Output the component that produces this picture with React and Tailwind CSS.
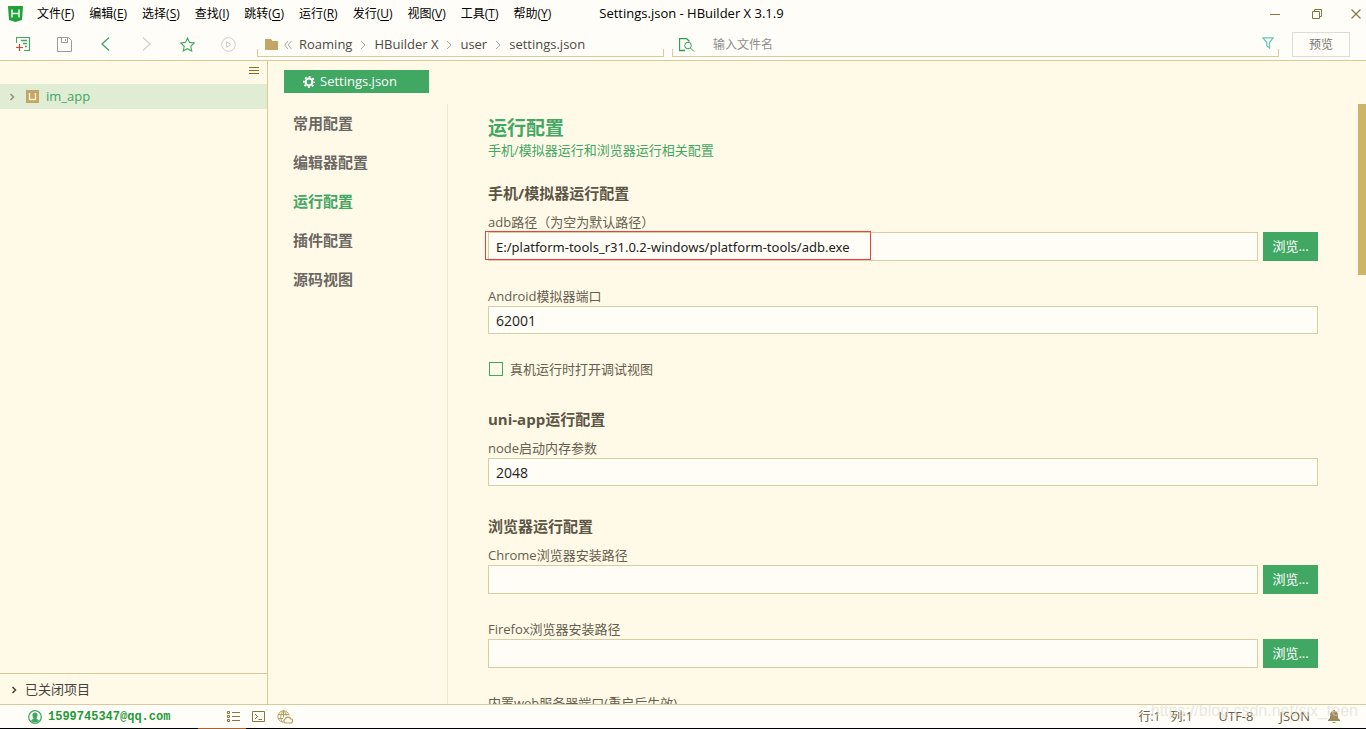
import { useState } from "react";

const menus = [
    ["文件", "F"],
    ["编辑", "E"],
    ["选择", "S"],
    ["查找", "I"],
    ["跳转", "G"],
    ["运行", "R"],
    ["发行", "U"],
    ["视图", "V"],
    ["工具", "T"],
    ["帮助", "Y"],
];

const crumbs = ["Roaming", "HBuilder X", "user", "settings.json"];

const navItems = ["常用配置", "编辑器配置", "运行配置", "插件配置", "源码视图"];

function ToolButton({ label, children }) {
    return (
        <button aria-label={label} className="flex h-8 w-[41px] items-center justify-center">
            {children}
        </button>
    );
}

function Chevron({ className }) {
    return (
        <svg width="6" height="10" viewBox="0 0 6 10" fill="none" stroke="currentColor" className={className}>
            <path d="M1 1l4 4-4 4" />
        </svg>
    );
}

function TreeArrow({ className }) {
    return (
        <svg width="6" height="8" viewBox="0 0 6 8" fill="none" stroke="currentColor" strokeWidth="1.500" className={className}>
            <path d="M1.500 1l3 3-3 3" />
        </svg>
    );
}

// open-bottom frame under the path bar and the search box
function Bracket() {
    return <div className="pointer-events-none absolute inset-x-0 bottom-0 h-2 border-x border-b border-[#d9c99b]" />;
}

function TitleBar() {
    return (
        <header className="flex h-7 shrink-0 items-center pl-2 text-xs text-black">
            <svg width="15" height="16" viewBox="0 0 15 16" className="shrink-0">
                <path d="M0 0h15l-1 14-6.500 2L1 14z" fill="#22a03c" />
                <path d="M4 3.500v8M11 3.500v8M4 7.500h7" stroke="#e9fbe9" strokeWidth="1.500" fill="none" />
            </svg>
            <nav className="ml-[14px] flex gap-[15px]">
                {menus.map(([name, key]) => (
                    <button key={key} className="whitespace-nowrap">
                        {name}(<span className="underline underline-offset-2">{key}</span>)
                    </button>
                ))}
            </nav>
            <h1 className="ml-12 whitespace-nowrap text-[13px]">Settings.json - HBuilder X 3.1.9</h1>
            <div className="ml-auto flex items-center text-[#8a7440]">
                <button aria-label="最小化" className="flex w-[42px] justify-center">
                    <svg width="10" height="11" viewBox="0 0 10 11" stroke="currentColor"><path d="M0 5.500h10" /></svg>
                </button>
                <button aria-label="还原" className="flex w-[42px] justify-center">
                    <svg width="10" height="10" viewBox="0 0 10 10" fill="none" stroke="currentColor">
                        <path d="M.5 2.500h7v7h-7zM2.500 2.500v-2h7v7h-2" />
                    </svg>
                </button>
                <button aria-label="关闭" className="ml-2 flex w-5 justify-center">
                    <svg width="10" height="10" viewBox="0 0 10 10" fill="none" stroke="currentColor" strokeWidth="1.200">
                        <path d="M.5.5l9 9M9.500.5l-9 9" />
                    </svg>
                </button>
            </div>
        </header>
    );
}

function ToolBar() {
    return (
        <div className="flex h-[33px] shrink-0 border-b border-[#d9c99b] pl-[3px]">
            <div className="flex shrink-0">
                <ToolButton label="新建">
                    <svg width="15" height="15" viewBox="0 0 15 15" fill="none">
                        <path d="M.5 6V.5h13v13H8" stroke="#41a863" strokeWidth="1.200" />
                        <path d="M5 3.500h6M7 6.500h4M9 9.500h2" stroke="#41a863" strokeWidth="1.300" />
                        <path d="M0 10.500h7M3.500 7v7" stroke="#d8452e" strokeWidth="1.200" />
                    </svg>
                </ToolButton>
                <ToolButton label="保存">
                    <svg width="15" height="15" viewBox="0 0 15 15" fill="none" stroke="#9b9b9b">
                        <path d="M.5.5h11l3 3v11H.5zM4.500.5v5h6v-5M8.500 2v2" />
                    </svg>
                </ToolButton>
                <ToolButton label="后退">
                    <svg width="9" height="14" viewBox="0 0 9 14" fill="none" stroke="#41a863" strokeWidth="1.400"><path d="M8 .5L1 7l7 6.500" /></svg>
                </ToolButton>
                <ToolButton label="前进">
                    <svg width="9" height="14" viewBox="0 0 9 14" fill="none" stroke="#cfcfcf" strokeWidth="1.200"><path d="M1 .5L8 7l-7 6.500" /></svg>
                </ToolButton>
                <ToolButton label="收藏">
                    <svg width="15" height="15" viewBox="0 0 15 15" fill="none" stroke="#41a863" strokeWidth="1.100">
                        <path d="M7.500 1l2 4.400 4.800.6-3.500 3.300.9 4.700-4.200-2.300L3.300 14l.9-4.700L.7 6l4.800-.6z" />
                    </svg>
                </ToolButton>
                <ToolButton label="运行">
                    <svg width="15" height="15" viewBox="0 0 15 15" fill="none" stroke="#cfcfcf">
                        <circle cx="7.500" cy="7.500" r="6.800" />
                        <path d="M5.500 4.700v5.600l4.500-2.800z" />
                    </svg>
                </ToolButton>
            </div>

            <div className="relative mb-[3px] ml-2 flex w-[407px] items-center pl-2 pt-1 text-[13px] text-[#4c4a45]">
                <svg width="13" height="11" viewBox="0 0 13 11" className="mr-[6px] shrink-0">
                    <path d="M0 0h6l1.500 2H13v9H0z" fill="#c1a665" />
                </svg>
                <svg width="8" height="8" viewBox="0 0 8 8" fill="none" stroke="#a5a5a5" className="mr-[7px] shrink-0">
                    <path d="M4 0L.7 4 4 8M7.500 0L4.200 4l3.300 4" />
                </svg>
                {crumbs.map((crumb, i) => (
                    <span key={crumb} className="flex items-center whitespace-nowrap">
                        {i > 0 && <Chevron className="mx-2 text-[#a5a5a5]" />}
                        <button>{crumb}</button>
                    </span>
                ))}
                <Bracket />
            </div>

            <div className="relative mb-[3px] ml-2 flex min-w-0 flex-1 items-center pl-[7px] pr-[5px] pt-1">
                <svg width="16" height="14" viewBox="0 0 16 14" fill="none" stroke="#2aa152" className="shrink-0">
                    <path d="M6 12.500H.5V.5h7l3 3" strokeWidth="1.300" />
                    <circle cx="9" cy="7.500" r="3.300" />
                    <path d="M11.500 10l3.500 3.500" />
                </svg>
                <input
                    type="text"
                    aria-label="输入文件名"
                    placeholder="输入文件名"
                    className="ml-[18px] h-5 min-w-0 flex-1 bg-transparent text-xs outline-none placeholder:text-[#8e8e8e]"
                />
                <button aria-label="过滤" className="mb-1">
                    <svg width="12" height="12" viewBox="0 0 12 12" fill="none" stroke="#5cc9b5" strokeWidth="1.200">
                        <path d="M.8.800h10.400L7.500 5.500V11L4.800 9V5.500z" />
                    </svg>
                </button>
                <Bracket />
            </div>
            <button className="ml-[13px] mr-4 mt-1 h-[25px] w-[58px] shrink-0 border border-[#dcdcdc] text-xs text-[#757575]">预览</button>
        </div>
    );
}

function Sidebar() {
    return (
        <aside className="flex w-[268px] shrink-0 flex-col border-r border-[#d9c99b]">
            <div className="flex h-[23px] justify-end pr-2 pt-[6px]">
                <button aria-label="菜单" className="h-[7px]">
                    <svg width="10" height="7" viewBox="0 0 10 7" stroke="#8a6d1f"><path d="M0 .5h10M0 3.500h10M0 6.500h10" /></svg>
                </button>
            </div>
            <button className="flex h-[25px] items-center bg-[#e0edd4] pl-[9px] text-[13px] text-[#41a863]">
                <TreeArrow className="text-[#9a8f70]" />
                <svg width="13" height="13" viewBox="0 0 13 13" className="ml-[11px] mr-[7px]">
                    <path d="M0 0h13v13H0z" fill="#c1a665" />
                    <path d="M3.500 3v6.500h6V3" fill="none" stroke="#fff3cf" strokeWidth="1.400" />
                </svg>
                im_app
            </button>
            <button className="mt-auto flex h-[31px] items-center gap-2 border-t border-[#d9c99b] pl-[11px] pt-px text-[13px] text-[#45423b]">
                <TreeArrow className="text-[#45423b]" />
                已关闭项目
            </button>
        </aside>
    );
}

function Field({ id, label, value = "", browse, marked }) {
    const [text, setText] = useState(value);

    return (
        <div>
            <label htmlFor={id} className="block text-[13px] leading-5 text-[#665f4f]">{label}</label>
            <div className="relative flex gap-[5px]">
                <input
                    id={id}
                    type="text"
                    value={text}
                    onChange={(e) => setText(e.target.value)}
                    className={
                        browse
                            ? "h-[29px] min-w-0 flex-1 border border-[#d9cda3] bg-[#fffdf6] px-[7px] font-[Noto_Sans,Noto_Sans_CJK_SC,sans-serif] text-[13px] text-[#222] outline-none"
                            : "h-7 min-w-0 flex-1 border border-[#d9cda3] bg-[#fffdf6] px-[7px] text-sm text-[#222] outline-none"
                    }
                />
                {browse && <button className="w-[55px] bg-[#41a863] text-[13px] text-white">浏览...</button>}
                {marked && <div className="pointer-events-none absolute -left-[3px] -top-px h-[29px] w-[386px] border border-[#ee3f3f]" />}
            </div>
        </div>
    );
}

function Section({ title, children }) {
    return (
        <section>
            <h3 className="mb-[7px] text-[15px] font-bold leading-6 text-[#5c5545]">{title}</h3>
            <div className="flex flex-col gap-[25px]">{children}</div>
        </section>
    );
}

function Settings() {
    const [active, setActive] = useState("运行配置");

    return (
        <main className="flex min-w-0 flex-1 flex-col">
            <div className="flex h-[43px] shrink-0 pl-4 pt-[9px]">
                <button className="flex h-[23px] w-[145px] items-center gap-[5px] bg-[#41a863] pl-[19px] text-[13px] text-white">
                    <svg width="12" height="12" viewBox="0 0 12 12" fill="none" stroke="#fff">
                        <circle cx="6" cy="6" r="3.400" strokeWidth="2" />
                        <circle cx="6" cy="6" r="5.100" strokeWidth="1.800" strokeDasharray="2 2.005" strokeDashoffset="1" />
                    </svg>
                    Settings.json
                </button>
            </div>
            <div className="flex min-h-0 flex-1">
                <nav className="flex w-[180px] shrink-0 flex-col border-r border-[#f1e8d0] pl-[25px]">
                    {navItems.map((item) => (
                        <button
                            key={item}
                            onClick={() => setActive(item)}
                            className={
                                item === active
                                    ? "h-[39px] text-left text-[15px] font-bold text-[#41a863]"
                                    : "h-[39px] text-left text-[15px] font-bold text-[#6b6762]"
                            }
                        >
                            {item}
                        </button>
                    ))}
                </nav>
                <div className="min-w-0 flex-1 overflow-hidden pl-10 pr-10 pt-[10px]">
                    <h2 className="text-[19px] font-bold leading-7 text-[#41a863]">运行配置</h2>
                    <p className="mb-[23px] text-[13px] leading-4 text-[#41a863]">手机/模拟器运行和浏览器运行相关配置</p>
                    <div className="flex flex-col gap-7">
                        <Section title="手机/模拟器运行配置">
                            <Field id="adb" label="adb路径（为空为默认路径）" value="E:/platform-tools_r31.0.2-windows/platform-tools/adb.exe" browse marked />
                            <Field id="port" label="Android模拟器端口" value="62001" />
                            <label className="flex items-center gap-[7px] pl-px text-[13px] leading-5 text-[#665f4f]">
                                <input type="checkbox" className="size-[14px] appearance-none border border-[#41a863] checked:bg-[#41a863]" />
                                真机运行时打开调试视图
                            </label>
                        </Section>
                        <Section title="uni-app运行配置">
                            <Field id="node" label="node启动内存参数" value="2048" />
                        </Section>
                        <Section title="浏览器运行配置">
                            <Field id="chrome" label="Chrome浏览器安装路径" browse />
                            <Field id="firefox" label="Firefox浏览器安装路径" browse />
                            <Field id="web" label="内置web服务器端口(重启后生效)" />
                        </Section>
                    </div>
                </div>
                <div className="w-2 shrink-0">
                    <div className="h-[171px] bg-[#cdb568]" />
                </div>
            </div>
        </main>
    );
}

function StatusBar() {
    return (
        <footer className="relative flex h-[25px] shrink-0 items-center border-b border-t border-b-black border-t-[#d9c99b] pl-7 text-[13px] text-[#6b5f42]">
            <button className="flex w-[199px] items-center gap-[6px] font-[Liberation_Mono,monospace] text-xs font-bold text-[#1f9b38]">
                <svg width="14" height="14" viewBox="0 0 14 14">
                    <circle cx="7" cy="7" r="6.300" fill="none" stroke="#41a863" strokeWidth="1.300" />
                    <path d="M7 2.500c1.800 0 2.600 1.200 2.600 2.700S8.800 8 8.400 8.400c.2.800 2.100.8 2.600 2.100-1 1.200-2.500 2-4 2s-3-.8-4-2c.5-1.300 2.400-1.300 2.600-2.100C5.200 8 4.400 6.700 4.400 5.200S5.200 2.500 7 2.500z" fill="#41a863" />
                </svg>
                1599745347@qq.com
            </button>
            <div className="flex items-center gap-3">
                <button aria-label="大纲">
                    <svg width="13" height="11" viewBox="0 0 13 11" fill="none" stroke="#8a7440">
                        <path d="M.5.5h2v2h-2zM.5 4.500h2v2h-2zM.5 8.500h2v2h-2zM5 1.500h8M5 5.500h8M5 9.500h8" />
                    </svg>
                </button>
                <button aria-label="终端">
                    <svg width="13" height="11" viewBox="0 0 13 11" fill="none" stroke="#8a7440">
                        <path d="M.5.5h12v10H.5zM3 3l2.500 2.500L3 8M6.500 8.500H10" />
                    </svg>
                </button>
                <button aria-label="云端">
                    <svg width="16" height="14" viewBox="0 0 16 14" fill="none" stroke="#b79c5c">
                        <path d="M6 12.200A5.700 5.700 0 1 1 12.200 5.500M6.500.8C3 4 3 9 5.500 12M6.500.8c2 1.500 2.700 3.200 2.800 5M1 4.500h10.500M1 8.500h5M6.500.8v6.500" />
                        <path d="M8.500 13h5a2 2 0 0 0 .3-4 3 3 0 0 0-5.600 0 2.100 2.100 0 0 0 .3 4z" strokeWidth="1.200" />
                    </svg>
                </button>
            </div>
            <div className="ml-auto flex items-center pr-[26px]">
                <span className="text-xs">行:1</span>
                <span className="ml-[10px] text-xs">列:1</span>
                <button className="ml-[26px]">UTF-8</button>
                <button className="ml-[26px]">JSON</button>
                <button aria-label="通知" className="ml-[18px]">
                    <svg width="12" height="13" viewBox="0 0 12 13" fill="#9c8a5c">
                        <path d="M5 0h2v1c2 .5 3 2 3 4v3l2 2v1H0v-1l2-2V5c0-2 1-3.500 3-4zM4.500 12h3v1h-3z" />
                    </svg>
                </button>
            </div>
            <div className="pointer-events-none absolute -top-1 right-2 font-[Liberation_Sans,sans-serif] text-base leading-5 text-[#dcd8cd]/60">
                https://blog.csdn.net/six_teen
            </div>
            <div className="absolute -bottom-px left-[198px] h-px w-12 bg-[#a5622f]" />
        </footer>
    );
}

export default function App() {
    return (
        <div className="flex h-screen flex-col overflow-hidden bg-[#fffdf8] font-[Open_Sans,Noto_Sans_CJK_SC,sans-serif]">
            <TitleBar />
            <ToolBar />
            <div className="flex min-h-0 flex-1 bg-[#fff9e7]">
                <Sidebar />
                <Settings />
            </div>
            <StatusBar />
        </div>
    );
}
